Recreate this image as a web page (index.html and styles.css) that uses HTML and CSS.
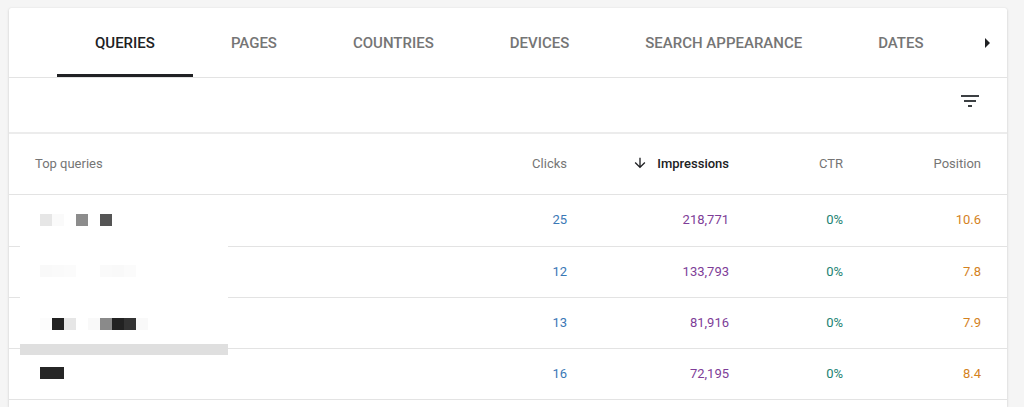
FILE: index.html
```html
<!DOCTYPE html>
<html>
<head>
  <title>Performance - Queries</title>
  <link rel="stylesheet" href="styles.css">
</head>
<body>

  <div class="card">

    <!-- Tab strip -->
    <div class="tabs">
      <div class="tab-list">
        <div class="tab active">Queries</div>
        <div class="tab">Pages</div>
        <div class="tab">Countries</div>
        <div class="tab">Devices</div>
        <div class="tab">Search appearance</div>
        <div class="tab">Dates</div>
      </div>
      <div class="tab-next">
        <svg width="24" height="24" viewBox="0 0 24 24"><path d="M10 17l5-5-5-5v10z" fill="#202124"/></svg>
      </div>
    </div>

    <!-- Filter toolbar -->
    <div class="toolbar">
      <svg class="filter-icon" width="24" height="24" viewBox="0 0 24 24"><path d="M10 18h4v-2h-4v2zM3 6v2h18V6H3zm3 7h12v-2H6v2z" fill="#3c4043"/></svg>
    </div>

    <!-- Table -->
    <div class="table">
      <div class="row head">
        <div class="cell">Top queries</div>
        <div class="cell num">Clicks</div>
        <div class="cell num sorted">
          <svg width="16" height="16" viewBox="0 0 24 24"><path d="M20 12l-1.41-1.41L13 16.17V4h-2v12.17l-5.58-5.59L4 12l8 8 8-8z" fill="#202124"/></svg>
          Impressions
        </div>
        <div class="cell num">CTR</div>
        <div class="cell num">Position</div>
      </div>

      <div class="row first">
        <div class="cell query">
          <span class="pix" style="background:#e6e6e6"></span><span class="pix" style="background:#fafafa"></span><span class="pix"></span><span class="pix" style="background:#8c8c8c"></span><span class="pix"></span><span class="pix" style="background:#555"></span>
        </div>
        <div class="cell num clicks">25</div>
        <div class="cell num impr">218,771</div>
        <div class="cell num ctr">0%</div>
        <div class="cell num pos">10.6</div>
      </div>

      <div class="row">
        <div class="cell query">
          <span class="pix" style="background:#f9f9f9"></span><span class="pix" style="background:#fafafa"></span><span class="pix" style="background:#fbfbfb"></span><span class="pix"></span><span class="pix"></span><span class="pix" style="background:#fafafa"></span><span class="pix" style="background:#f9f9f9"></span><span class="pix" style="background:#fbfbfb"></span>
        </div>
        <div class="cell num clicks">12</div>
        <div class="cell num impr">133,793</div>
        <div class="cell num ctr">0%</div>
        <div class="cell num pos">7.8</div>
      </div>

      <div class="row">
        <div class="cell query low">
          <span class="pix" style="background:#fcfcfc"></span><span class="pix" style="background:#222"></span><span class="pix" style="background:#e6e6e6"></span><span class="pix"></span><span class="pix" style="background:#f9f9f9"></span><span class="pix" style="background:#8a8a8a"></span><span class="pix" style="background:#222"></span><span class="pix" style="background:#333"></span><span class="pix" style="background:#f9f9f9"></span>
        </div>
        <div class="cell num clicks">13</div>
        <div class="cell num impr">81,916</div>
        <div class="cell num ctr">0%</div>
        <div class="cell num pos">7.9</div>
      </div>

      <div class="row">
        <div class="cell query">
          <span class="pix" style="background:#262626"></span><span class="pix" style="background:#262626"></span>
        </div>
        <div class="cell num clicks">16</div>
        <div class="cell num impr">72,195</div>
        <div class="cell num ctr">0%</div>
        <div class="cell num pos">8.4</div>
      </div>

      <!-- redaction patches laid over the query column -->
      <div class="mask"></div>
      <div class="mask-bar"></div>
    </div>

  </div>

</body>
</html>
```

FILE: styles.css
```css
* {
  box-sizing: border-box;
}

html, body {
  margin: 0;
  height: 100%;
  background-color: #f5f5f5;
  font-family: Roboto, "Liberation Sans", Arial, sans-serif;
  overflow: hidden;
}

.card {
  width: 998px;
  height: 399px;
  margin: 8px 0 0 9px;
  background-color: #fff;
  border-radius: 2px 2px 0 0;
  box-shadow: 0 1px 3px rgba(0,0,0,0.16), 0 0 1px rgba(0,0,0,0.1);
}

/* tabs */

.tabs {
  display: flex;
  height: 70px;
  border-bottom: 1px solid #e3e3e3;
}

.tab-list {
  display: flex;
  padding-left: 48px;
  overflow: hidden;
}

.tab {
  position: relative;
  display: flex;
  align-items: center;
  padding: 0 38px;
  font-size: 15px;
  font-weight: 500;
  text-transform: uppercase;
  color: #757575;
  white-space: nowrap;
}

.tab.active {
  color: #202124;
}

.tab.active::after {
  content: "";
  position: absolute;
  left: 0;
  right: 0;
  bottom: 0;
  height: 3px;
  background-color: #202124;
}

.tab-next {
  flex-shrink: 0;
  width: 48px;
  margin-left: auto;
  display: flex;
  align-items: center;
  justify-content: flex-end;
  padding-right: 8px;
}

/* toolbar */

.toolbar {
  display: flex;
  justify-content: flex-end;
  align-items: flex-start;
  height: 56px;
  padding: 11px 25px 0 0;
  border-bottom: 2px solid #ececec;
}

/* table */

.table {
  position: relative;
}

.row {
  display: grid;
  grid-template-columns: 1fr 140px 162px 114px 138px;
  align-items: center;
  height: 51px;
  padding: 0 26px 2px 26px;
  border-bottom: 1px solid #e3e3e3;
  font-size: 13px;
}

.row.first {
  height: 52px;
}

.row.head {
  height: 61px;
  color: #757575;
}

.cell.num {
  display: flex;
  justify-content: flex-end;
  align-items: center;
}

.cell.sorted {
  color: #202124;
  font-weight: 500;
}

.cell.sorted svg {
  margin-right: 9px;
}

.clicks { color: #3a78b6; }
.impr   { color: #7e3d98; }
.ctr    { color: #1c8272; }
.pos    { color: #d4821e; }

.query {
  display: flex;
  padding-left: 5px;
}

.query.low {
  padding-top: 4px;
}

.pix {
  position: relative;
  z-index: 2;
  width: 12px;
  height: 12px;
}

.mask {
  position: absolute;
  z-index: 1;
  left: 11px;
  top: 106px;
  width: 208px;
  height: 104px;
  background-color: #fff;
}

.mask-bar {
  position: absolute;
  z-index: 1;
  left: 11px;
  top: 210px;
  width: 208px;
  height: 11px;
  background-color: #dfdfdf;
}
```
